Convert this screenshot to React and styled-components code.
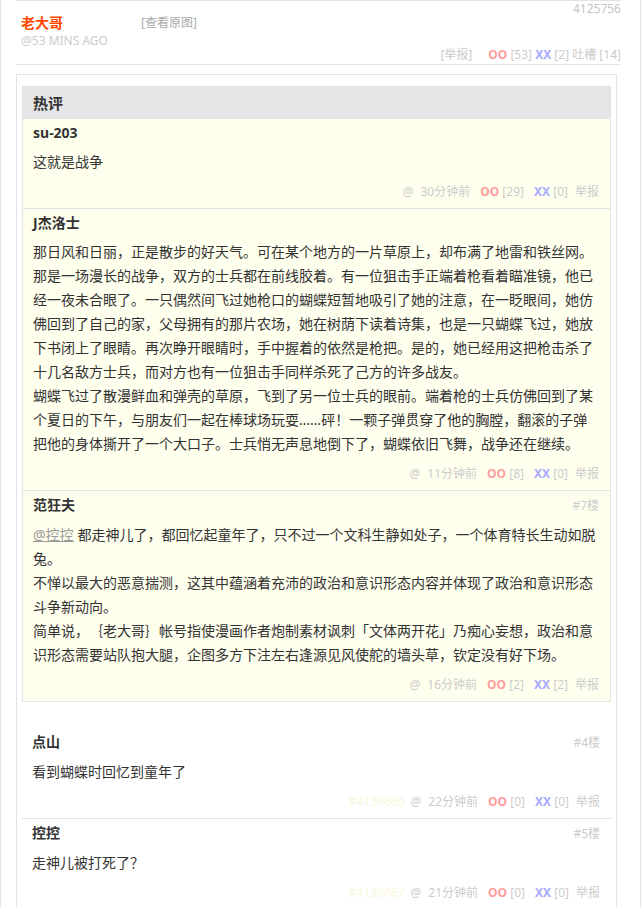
import React from 'react'
import styled, { createGlobalStyle } from 'styled-components'

const GlobalStyle = createGlobalStyle`
  html, body {
    margin: 0;
    padding: 0;
    background: #fff;
  }
  body {
    font-family: "Noto Sans", "Noto Sans CJK SC", sans-serif;
    color: #333;
    text-spacing-trim: space-all;
  }
`

const hot = [
  {
    name: 'su-203',
    text: ['这就是战争'],
    time: '30分钟前',
    oo: 29,
    xx: 0,
  },
  {
    name: 'J杰洛士',
    text: [
      '那日风和日丽，正是散步的好天气。可在某个地方的一片草原上，却布满了地雷和铁丝网。那是一场漫长的战争，双方的士兵都在前线胶着。有一位狙击手正端着枪看着瞄准镜，他已经一夜未合眼了。一只偶然间飞过她枪口的蝴蝶短暂地吸引了她的注意，在一眨眼间，她仿佛回到了自己的家，父母拥有的那片农场，她在树荫下读着诗集，也是一只蝴蝶飞过，她放下书闭上了眼睛。再次睁开眼睛时，手中握着的依然是枪把。是的，她已经用这把枪击杀了十几名敌方士兵，而对方也有一位狙击手同样杀死了己方的许多战友。',
      '蝴蝶飞过了散漫鲜血和弹壳的草原，飞到了另一位士兵的眼前。端着枪的士兵仿佛回到了某个夏日的下午，与朋友们一起在棒球场玩耍……砰！一颗子弹贯穿了他的胸膛，翻滚的子弹把他的身体撕开了一个大口子。士兵悄无声息地倒下了，蝴蝶依旧飞舞，战争还在继续。',
    ],
    time: '11分钟前',
    oo: 8,
    xx: 0,
  },
  {
    name: '范狂夫',
    floor: '#7楼',
    at: '@控控',
    text: [
      '都走神儿了，都回忆起童年了，只不过一个文科生静如处子，一个体育特长生动如脱兔。',
      '不惮以最大的恶意揣测，这其中蕴涵着充沛的政治和意识形态内容并体现了政治和意识形态斗争新动向。',
      '简单说，｛老大哥｝帐号指使漫画作者炮制素材讽刺「文体两开花」乃痴心妄想，政治和意识形态需要站队抱大腿，企图多方下注左右逢源见风使舵的墙头草，钦定没有好下场。',
    ],
    time: '16分钟前',
    oo: 2,
    xx: 2,
  },
]

const normal = [
  {
    id: '#4139660',
    name: '点山',
    floor: '#4楼',
    text: ['看到蝴蝶时回忆到童年了'],
    time: '22分钟前',
    oo: 0,
    xx: 0,
  },
  {
    id: '#4139667',
    name: '控控',
    floor: '#5楼',
    text: ['走神儿被打死了？'],
    time: '21分钟前',
    oo: 0,
    xx: 0,
  },
]

const Comment = ({ c }) => (
  <Item>
    <NameRow>
      <Name>{c.name}</Name>
      {c.floor && <Floor>{c.floor}</Floor>}
    </NameRow>
    <Body>
      {c.text.map((t, i) => (
        <p key={i}>
          {i === 0 && c.at && <AtLink>{c.at}</AtLink>}
          {t}
        </p>
      ))}
    </Body>
    <Foot>
      {c.id && <HiddenId>{c.id}</HiddenId>}
      <At>@</At>
      <span>{c.time}</span>
      <Vote><Oo>OO</Oo> [{c.oo}]</Vote>
      <Vote><Xx>XX</Xx> [{c.xx}]</Vote>
      <Report>举报</Report>
    </Foot>
  </Item>
)

const App = () => {
  return (
    <Page>
      <GlobalStyle />
      <Post>
        <PostId>4125756</PostId>
        <PostRow>
          <Author>
            <AuthorName>老大哥</AuthorName>
            <AuthorTime>@53 mins ago</AuthorTime>
          </Author>
          <ViewOrig>[查看原图]</ViewOrig>
        </PostRow>
        <PostFoot>
          <PostReport>[举报]</PostReport>
          <Oo>OO</Oo>&nbsp;[53]&nbsp;<Xx>XX</Xx>&nbsp;[2]&nbsp;吐槽&nbsp;[14]
        </PostFoot>
      </Post>

      <CommentsBox>
        <HotBox>
          <HotTitle>热评</HotTitle>
          {hot.map((c, i) => <Comment key={i} c={c} />)}
        </HotBox>
        <List>
          {normal.map((c, i) => <Comment key={i} c={c} />)}
        </List>
      </CommentsBox>
    </Page>
  )
}

const Page = styled.div`
  box-sizing: border-box;
  width: 641px;
  min-height: 907px;
  border-left: 1px solid #e6e6e6;
  border-right: 1px solid #e6e6e6;
  padding: 0 19px 0 15px;
  overflow: hidden;
`

const Post = styled.div`
  border-top: 1px solid #e3e3e3;
  border-bottom: 1px solid #e3e3e3;
  padding: 0 0 2px 5px;
  font-size: 12px;
`

const PostId = styled.div`
  height: 13px;
  line-height: 16px;
  text-align: right;
  color: #c4c4c4;
`

const PostRow = styled.div`
  display: flex;
`

const Author = styled.div`
  width: 120px;
`

const AuthorName = styled.div`
  color: #ff4a00;
  font-weight: bold;
  font-size: 14px;
  line-height: 18px;
`

const AuthorTime = styled.div`
  color: #ccc;
  text-transform: uppercase;
  line-height: 14px;
  margin-top: 2px;
`

const ViewOrig = styled.div`
  color: #aaa;
  line-height: 18px;
`

const PostFoot = styled.div`
  text-align: right;
  color: #ccc;
  line-height: 14px;
`

const PostReport = styled.span`
  margin-right: 16px;
`

const Oo = styled.span`
  color: #ff9e9e;
  font-weight: bold;
`

const Xx = styled.span`
  color: #aaaaff;
  font-weight: bold;
`

const CommentsBox = styled.div`
  margin: 9px 4px 0 0;
  border: 1px solid #e3e3e3;
  border-bottom: none;
  padding: 11px 5px 0;
`

const HotBox = styled.div`
  border: 1px solid #e3e3e3;
  background: #ffffee;
`

const HotTitle = styled.div`
  background: #e5e5e5;
  height: 32px;
  line-height: 32px;
  padding-left: 10px;
  font-size: 15px;
  font-weight: bold;
  color: #333;
`

const List = styled.div`
  margin-top: 26px;
`

const Item = styled.div`
  padding: 2px 11px 4px 10px;
  border-bottom: 1px solid #e3e3e3;

  ${HotBox} &:last-child {
    border-bottom: none;
  }
`

const NameRow = styled.div`
  display: flex;
  justify-content: space-between;
  align-items: baseline;
  line-height: 24px;
`

const Name = styled.span`
  font-size: 14px;
  font-weight: bold;
  color: #333;
`

const Floor = styled.span`
  font-size: 12px;
  color: #ccc;
`

const Body = styled.div`
  margin-top: 5px;
  font-size: 14px;
  line-height: 24px;
  color: #333;

  p {
    margin: 0;
  }
`

const AtLink = styled.a`
  color: #999;
  text-decoration: underline;
  margin-right: 4px;
`

const Foot = styled.div`
  margin-top: 6px;
  display: flex;
  justify-content: flex-end;
  font-size: 12px;
  line-height: 24px;
  color: #ccc;
  white-space: pre;
`

const HiddenId = styled.span`
  color: #f8f6da;
  margin-right: 6px;
`

const At = styled.span`
  margin-right: 7px;
`

const Vote = styled.span`
  margin-left: 10px;
`

const Report = styled.span`
  margin-left: 7px;
`

export default App
